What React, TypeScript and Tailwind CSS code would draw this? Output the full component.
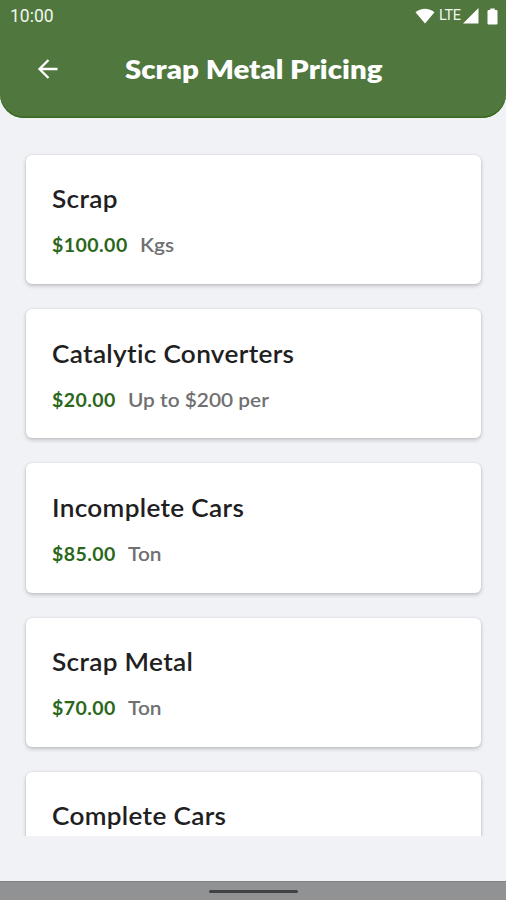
type PriceItem = {
  name: string;
  price?: string;
  unit?: string;
};

const ITEMS: PriceItem[] = [
  { name: "Scrap", price: "$100.00", unit: "Kgs" },
  { name: "Catalytic Converters", price: "$20.00", unit: "Up to $200 per" },
  { name: "Incomplete Cars", price: "$85.00", unit: "Ton" },
  { name: "Scrap Metal", price: "$70.00", unit: "Ton" },
  { name: "Complete Cars" },
];

function StatusBar() {
  return (
    <div className="flex h-8 items-center justify-between pl-[10px] pr-2 font-[Roboto,sans-serif] text-[#f1f6ee]">
      <span className="text-[17.5px] leading-8">10:00</span>
      <div className="flex h-8 items-center">
        <svg className="h-4 w-5" viewBox="0 0 20 16" fill="white">
          <path d="M0.5 4.3C6 -0.6 14 -0.6 19.5 4.3L10 15.5Z" />
        </svg>
        <span className="ml-1 w-[22px] text-[14.5px] leading-[30px] tracking-[-0.4px]">LTE</span>
        <svg className="ml-[2px] h-4 w-4" viewBox="0 0 16 16" fill="white">
          <path d="M0 15.5L15.5 0V15.5Z" />
        </svg>
        <svg className="ml-2 h-[17px] w-[11px]" viewBox="0 0 11 17" fill="white">
          <path d="M3.2 0.5H7.8V2H9.5Q10.5 2 10.5 3V15.5Q10.5 16.5 9.5 16.5H1.5Q0.5 16.5 0.5 15.5V3Q0.5 2 1.5 2H3.2Z" />
        </svg>
      </div>
    </div>
  );
}

function Header() {
  return (
    <header className="h-[118px] shrink-0 rounded-b-[24px] bg-[#4f773e] shadow-[inset_0_-1.5px_0_#386a1d]">
      <StatusBar />
      <div className="flex h-[74px] items-center pl-[37px]">
        <svg className="h-5 w-[22px]" viewBox="0 0 22 20" fill="none" stroke="white" strokeWidth="2.3">
          <path d="M20.5 10H2.5M11.5 1L2.5 10L11.5 19" />
        </svg>
        <h1 className="ml-[65.5px] origin-left scale-x-[1.09] whitespace-nowrap text-[27px] font-extrabold leading-8 text-white">
          Scrap Metal Pricing
        </h1>
      </div>
    </header>
  );
}

function PriceCard({ item }: { item: PriceItem }) {
  return (
    <div className="h-[129.3px] shrink-0 rounded-[6px] bg-white pl-[26px] pt-[28.6px] shadow-[0_2px_4px_rgba(0,0,0,0.2),0_0_2px_rgba(0,0,0,0.12)]">
      <h2 className="origin-left scale-x-[1.09] whitespace-nowrap text-[24px] font-semibold leading-8 tracking-[0.3px] text-[#202022] [font-variant-ligatures:none]">
        {item.name}
      </h2>
      {item.price && (
        <div className="mt-[18px] flex gap-3 whitespace-nowrap text-[19.5px] leading-6">
          <span className="font-bold tracking-[0.45px] text-[#2b671b]">{item.price}</span>
          <span className="origin-left scale-x-[1.07] font-semibold text-[#707072]">{item.unit}</span>
        </div>
      )}
    </div>
  );
}

export default function App() {
  return (
    <div className="flex h-[900px] w-[506px] flex-col overflow-hidden bg-[#f0f2f6] font-[Lato,sans-serif]">
      <Header />
      <main className="flex h-[718px] shrink-0 flex-col gap-[25px] overflow-hidden pl-[26px] pr-[25px] pt-[36.7px]">
        {ITEMS.map((item) => (
          <PriceCard key={item.name} item={item} />
        ))}
      </main>
      <div className="mt-auto flex h-[19px] items-center justify-center border-t border-[#808184] bg-[#919294]">
        <div className="h-[3px] w-[89px] rounded-full bg-[#424244]" />
      </div>
    </div>
  );
}
